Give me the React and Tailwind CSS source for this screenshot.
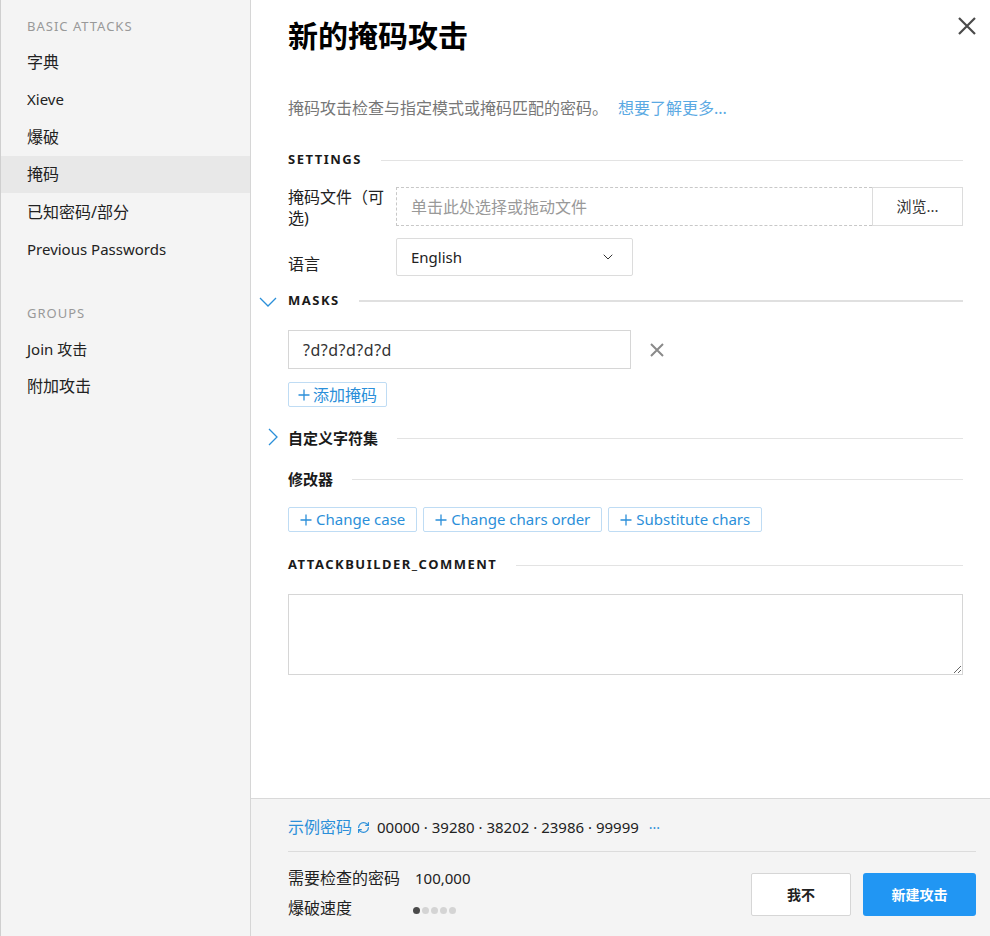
import { ChevronDown, RefreshCw } from "lucide-react";

const font = "font-['Noto_Sans','Noto_Sans_CJK_SC',sans-serif]";

function SideItem({ label, active, cjk }) {
  return (
    <div
      className={`h-[37.5px] flex items-center px-[26px] text-[#222] ${
        cjk ? "text-[16px]" : "text-[15px]"
      } ${active ? "bg-[#e8e8e8]" : ""}`}
    >
      {label}
    </div>
  );
}

function SectionTitle({ children, className = "", lineClass = "h-px bg-[#e3e3e3]", upper = true }) {
  return (
    <div className={`flex items-center h-[20px] ${className}`}>
      <span
        className={`font-bold text-[#1a1a1a] ${
          upper ? "text-[13px] tracking-[1.5px]" : "text-[15px]"
        }`}
      >
        {children}
      </span>
      <div className={`flex-1 ml-[19px] ${lineClass}`} />
    </div>
  );
}

function Plus() {
  return (
    <svg width="12" height="12" viewBox="0 0 12 12" className="mr-[3px]">
      <path d="M6 0.5v11M0.5 6h11" stroke="#2b8fd9" strokeWidth="1.3" />
    </svg>
  );
}

function ModButton({ label }) {
  return (
    <button className="h-[25px] px-[11px] flex items-center border border-[#bfdcf4] rounded-[2px] bg-white text-[15px] text-[#2b8fd9]">
      <Plus />
      <span className="ml-[1px]">{label}</span>
    </button>
  );
}

export default function App() {
  return (
    <div className={`${font} w-[990px] h-[936px] flex bg-white overflow-hidden`}>
      {/* Sidebar */}
      <aside className="w-[251px] shrink-0 h-full bg-[#f4f4f4] border-l border-l-[#cfcfcf] border-r border-r-[#d6d6d6]">
        <div className="mt-[14px] h-[24px] leading-[24px] px-[26px] text-[13px] tracking-[1px] text-[#999]">
          BASIC ATTACKS
        </div>
        <div className="mt-[5px]">
          <SideItem label="字典" cjk />
          <SideItem label="Xieve" />
          <SideItem label="爆破" cjk />
          <SideItem label="掩码" cjk active />
          <SideItem label="已知密码/部分" cjk />
          <SideItem label="Previous Passwords" />
        </div>
        <div className="mt-[33px] h-[24px] leading-[24px] px-[26px] text-[13px] tracking-[1px] text-[#999]">
          GROUPS
        </div>
        <div className="mt-[5px]">
          <SideItem label="Join 攻击" />
          <SideItem label="附加攻击" cjk />
        </div>
      </aside>

      {/* Main */}
      <main className="flex-1 flex flex-col h-full">
        <div className="flex-1 relative pl-[37px] pr-[27px] pt-[16px]">
          <button className="absolute right-[13px] top-[16px] w-[20px] h-[20px]">
            <svg width="20" height="20" viewBox="0 0 20 20">
              <path d="M2 2L18 18M18 2L2 18" stroke="#4a4a4a" strokeWidth="2.2" />
            </svg>
          </button>

          <h1 className="h-[40px] leading-[40px] text-[30px] font-bold text-black">
            新的掩码攻击
          </h1>

          <p className="mt-[42px] h-[20px] leading-[20px] text-[16px] text-[#777]">
            掩码攻击检查与指定模式或掩码匹配的密码。
            <span className="ml-[10px] text-[#5aa9e3]">想要了解更多...</span>
          </p>

          <SectionTitle className="mt-[32px]">SETTINGS</SectionTitle>

          {/* File row */}
          <div className="mt-[17px] flex h-[39px]">
            <div className="w-[108px] shrink-0 text-[16px] leading-[21px] text-[#222] pr-[6px]">
              掩码文件（可选)
            </div>
            <div className="flex-1 flex h-[39px]">
              <div className="flex-1 border border-dashed border-[#c8c8c8] border-r-0 flex items-center px-[14px] text-[16px] text-[#999]">
                单击此处选择或拖动文件
              </div>
              <button className="w-[91px] border border-[#dcdcdc] text-[15px] text-[#333] bg-white">
                浏览...
              </button>
            </div>
          </div>

          {/* Language row */}
          <div className="mt-[12px] flex">
            <div className="w-[108px] shrink-0 text-[16px] leading-[21px] text-[#222] pt-[16px]">
              语言
            </div>
            <div className="w-[237px] h-[38px] border border-[#dcdcdc] rounded-[2px] flex items-center justify-between pl-[14px] pr-[16px] text-[15px] text-[#222]">
              English
              <ChevronDown size={16} strokeWidth={1.5} color="#333" />
            </div>
          </div>

          {/* Masks */}
          <div className="mt-[15px] relative">
            <svg
              width="18"
              height="10"
              viewBox="0 0 18 10"
              className="absolute left-[-29px] top-[6px]"
            >
              <path d="M1 1L9 9L17 1" fill="none" stroke="#2b8fd9" strokeWidth="1.3" />
            </svg>
            <SectionTitle lineClass="h-[2px] bg-[#e0e0e0]">MASKS</SectionTitle>
          </div>

          <div className="mt-[19px] flex items-center">
            <div className="w-[343px] h-[39px] border border-[#d6d6d6] flex items-center px-[14px] text-[16px] tracking-[0.5px] text-[#333]">
              ?d?d?d?d?d
            </div>
            <svg width="14" height="14" viewBox="0 0 14 14" className="ml-[19px]">
              <path d="M1 1L13 13M13 1L1 13" stroke="#8a8a8a" strokeWidth="2" />
            </svg>
          </div>

          <button className="mt-[13px] h-[25px] px-[9px] flex items-center border border-[#bfdcf4] rounded-[2px] text-[16px] text-[#2b8fd9]">
            <Plus />
            添加掩码
          </button>

          {/* Custom charset */}
          <div className="mt-[21px] relative">
            <svg
              width="10"
              height="18"
              viewBox="0 0 10 18"
              className="absolute left-[-20px] top-[0px]"
            >
              <path d="M1 1L9 9L1 17" fill="none" stroke="#2b8fd9" strokeWidth="1.3" />
            </svg>
            <SectionTitle upper={false}>自定义字符集</SectionTitle>
          </div>

          <SectionTitle className="mt-[21px]" upper={false}>
            修改器
          </SectionTitle>

          <div className="mt-[18px] flex gap-[6px]">
            <ModButton label="Change case" />
            <ModButton label="Change chars order" />
            <ModButton label="Substitute chars" />
          </div>

          <SectionTitle className="mt-[23px]">ATTACKBUILDER_COMMENT</SectionTitle>

          <textarea className="mt-[19px] block w-full h-[81px] border border-[#d6d6d6] outline-none resize-y" />
        </div>

        {/* Footer */}
        <footer className="h-[138px] shrink-0 bg-[#f4f4f4] border-t border-[#d9d9d9] pl-[37px] pr-[14px] pt-[18px]">
          <div className="h-[20px] flex items-center">
            <span className="text-[16px] text-[#2b8fd9]">示例密码</span>
            <RefreshCw size={13} strokeWidth={2.2} color="#2b8fd9" className="ml-[5px]" />
            <span className="ml-[7px] text-[15px] text-[#222]">
              00000 · 39280 · 38202 · 23986 · 99999
            </span>
            <span className="ml-[10px] text-[14px] text-[#2b8fd9]">···</span>
          </div>
          <div className="mt-[14px] h-px bg-[#dcdcdc]" />
          <div className="flex justify-between">
            <div className="mt-[16px] text-[16px] text-[#222]">
              <div className="h-[20px] flex items-center">
                <span className="w-[127px]">需要检查的密码</span>
                <span className="text-[15px]">100,000</span>
              </div>
              <div className="mt-[10px] h-[20px] flex items-center">
                <span className="w-[125px]">爆破速度</span>
                <div className="flex gap-[2px] mt-[4px]">
                  <span className="w-[7px] h-[7px] rounded-full bg-[#4a4a4a]" />
                  <span className="w-[7px] h-[7px] rounded-full bg-[#d4d4d4]" />
                  <span className="w-[7px] h-[7px] rounded-full bg-[#d4d4d4]" />
                  <span className="w-[7px] h-[7px] rounded-full bg-[#d4d4d4]" />
                  <span className="w-[7px] h-[7px] rounded-full bg-[#d4d4d4]" />
                </div>
              </div>
            </div>
            <div className="mt-[21px] flex gap-[12px]">
              <button className="w-[100px] h-[43px] bg-white border border-[#d6d6d6] rounded-[2px] text-[14px] font-bold text-[#222]">
                我不
              </button>
              <button className="w-[113px] h-[43px] bg-[#2196f3] rounded-[3px] text-[14px] font-bold text-white">
                新建攻击
              </button>
            </div>
          </div>
        </footer>
      </main>
    </div>
  );
}
